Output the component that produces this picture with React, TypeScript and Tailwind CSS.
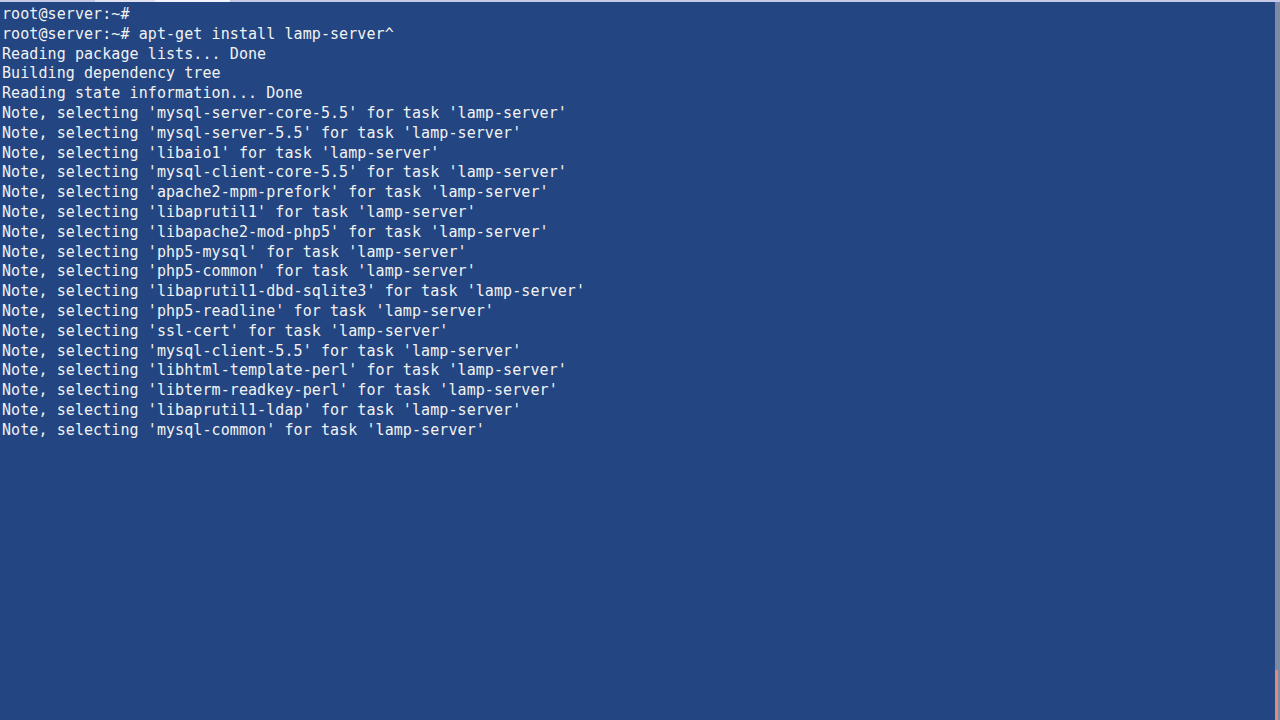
const lines: string[] = [
  "root@server:~#",
  "root@server:~# apt-get install lamp-server^",
  "Reading package lists... Done",
  "Building dependency tree",
  "Reading state information... Done",
  "Note, selecting 'mysql-server-core-5.5' for task 'lamp-server'",
  "Note, selecting 'mysql-server-5.5' for task 'lamp-server'",
  "Note, selecting 'libaio1' for task 'lamp-server'",
  "Note, selecting 'mysql-client-core-5.5' for task 'lamp-server'",
  "Note, selecting 'apache2-mpm-prefork' for task 'lamp-server'",
  "Note, selecting 'libaprutil1' for task 'lamp-server'",
  "Note, selecting 'libapache2-mod-php5' for task 'lamp-server'",
  "Note, selecting 'php5-mysql' for task 'lamp-server'",
  "Note, selecting 'php5-common' for task 'lamp-server'",
  "Note, selecting 'libaprutil1-dbd-sqlite3' for task 'lamp-server'",
  "Note, selecting 'php5-readline' for task 'lamp-server'",
  "Note, selecting 'ssl-cert' for task 'lamp-server'",
  "Note, selecting 'mysql-client-5.5' for task 'lamp-server'",
  "Note, selecting 'libhtml-template-perl' for task 'lamp-server'",
  "Note, selecting 'libterm-readkey-perl' for task 'lamp-server'",
  "Note, selecting 'libaprutil1-ldap' for task 'lamp-server'",
  "Note, selecting 'mysql-common' for task 'lamp-server'",
];

export default function App() {
  return (
    <div className="flex flex-col w-[1280px] h-[720px] overflow-hidden bg-[#234682]">
      {/* window tab strip */}
      <div className="flex h-[2px] shrink-0 bg-[#c5c9e6]">
        <div className="w-[95px] bg-[#c5c9e6]" />
        <div className="w-[60px] bg-[#dfe2f2]" />
        <div className="w-[75px] bg-[#f4f5fb]" />
      </div>
      <div className="flex flex-1 min-h-0">
        <div
          className="flex-1 pl-[2px] pt-[3px] text-[15px] leading-[19.8px] tracking-[0.08px] text-[#f2f2f2] whitespace-pre"
          style={{ fontFamily: '"DejaVu Sans Mono", "Liberation Mono", monospace' }}
        >
          {lines.map((l, i) => (
            <div key={i}>{l}</div>
          ))}
        </div>
        {/* scrollbar edge */}
        <div className="flex flex-col w-[5px] bg-[#7d8aa3]">
          <div className="flex-1" />
          <div className="h-[50px] w-[3px] bg-[#e08a78]" />
        </div>
      </div>
    </div>
  );
}
